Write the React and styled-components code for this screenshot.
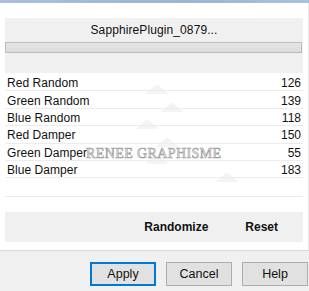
import React from 'react';
import styled, { createGlobalStyle } from 'styled-components';

const Global = createGlobalStyle`
  html, body {
    margin: 0;
    padding: 0;
    background: #f0f0f0;
    font-family: "Liberation Sans", Arial, sans-serif;
    font-size: 12px;
    color: #111;
  }
`;

const Window = styled.div`
  width: 309px;
  height: 291px;
  display: flex;
  flex-direction: column;
  overflow: hidden;
`;

const TitleEdge = styled.div`
  height: 3px;
  background: linear-gradient(90deg, #a9bfdc, #9cb5d6 60%, #aac1de);
`;

const Content = styled.div`
  position: relative;
  height: 247px;
  background: #fff;
  padding: 15px 5px 0 5px;
  box-sizing: border-box;
  border-right: 1px solid #e6e6e6;
  display: flex;
  flex-direction: column;
`;

const HeaderPanel = styled.div`
  height: 55px;
  background: #f0f0f0;
  display: flex;
  flex-direction: column;
  align-items: stretch;
`;

const PluginName = styled.div`
  text-align: center;
  padding-top: 5px;
  height: 19px;
  line-height: 14px;
  letter-spacing: 0.1px;
`;

const Bar = styled.div`
  height: 9px;
  margin-right: 1px;
  border: 1px solid #bcbcbc;
  background: linear-gradient(#e6e6e6, #dcdcdc);
`;

const List = styled.div`
  position: relative;
  margin-top: 1px;
  display: flex;
  flex-direction: column;
`;

const Row = styled.div`
  position: relative;
  z-index: 1;
  height: 17.4px;
  box-sizing: border-box;
  display: flex;
  justify-content: space-between;
  align-items: center;
  padding: 2px 2px 0 2px;
  border-bottom: 1px solid #ececec;
`;

const Label = styled.span`
  letter-spacing: 0.05px;
`;

const Value = styled.span``;

const Arrow = styled.svg`
  position: absolute;
  z-index: 0;
  width: 24px;
  height: 10px;
`;

const Watermark = styled.div`
  position: absolute;
  z-index: 2;
  left: 86px;
  top: 143px;
  font-family: "Liberation Serif", "Times New Roman", serif;
  font-size: 14px;
  color: #fff;
  letter-spacing: 0.4px;
  -webkit-text-stroke: 0.7px #a0a0a0;
  pointer-events: none;
`;

const Divider = styled.div`
  margin-top: 18px;
  height: 1px;
  background: #ececec;
`;

const ActionPanel = styled.div`
  margin-top: 15px;
  height: 30px;
  background: #f0f0f0;
  display: flex;
  justify-content: flex-end;
  align-items: center;
  padding-right: 25px;
  gap: 37px;
`;

const ActionButton = styled.span`
  font-weight: bold;
  font-size: 12px;
`;

const Footer = styled.div`
  flex: 1;
  border-top: 1px solid #dadada;
  background: #f0f0f0;
  display: flex;
  justify-content: flex-end;
  align-items: flex-start;
  padding: 11px 1px 0 0;
  gap: 10px;
`;

const Button = styled.button`
  width: 66px;
  height: 24px;
  box-sizing: border-box;
  font-family: "Liberation Sans", Arial, sans-serif;
  font-size: 12.5px;
  color: #111;
  background: #e1e1e1;
  border: ${p => (p.primary ? '2px solid #0078d7' : '1px solid #adadad')};
  padding: 0;
`;

const rows = [
  ['Red Random', 126],
  ['Green Random', 139],
  ['Blue Random', 118],
  ['Red Damper', 150],
  ['Green Damper', 55],
  ['Blue Damper', 183],
];

const arrows = [
  [140, 10],
  [155, 28],
  [130, 45],
  [150, 63],
  [140, 80],
  [210, 98],
];

export default function App() {
  return (
    <>
      <Global />
      <Window>
        <TitleEdge />
        <Content>
          <HeaderPanel>
            <PluginName>SapphirePlugin_0879...</PluginName>
            <Bar />
          </HeaderPanel>
          <List>
            {arrows.map(([x, y], i) => (
              <Arrow key={i} viewBox="0 0 24 10" style={{ left: x, top: y }}>
                <path d="M12 0 L24 10 L0 10 Z" fill="#f4f4f4" />
              </Arrow>
            ))}
            {rows.map(([name, val]) => (
              <Row key={name}>
                <Label>{name}</Label>
                <Value>{val}</Value>
              </Row>
            ))}
          </List>
          <Watermark>RENEE GRAPHISME</Watermark>
          <Divider />
          <ActionPanel>
            <ActionButton>Randomize</ActionButton>
            <ActionButton>Reset</ActionButton>
          </ActionPanel>
        </Content>
        <Footer>
          <Button primary>Apply</Button>
          <Button>Cancel</Button>
          <Button>Help</Button>
        </Footer>
      </Window>
    </>
  );
}
